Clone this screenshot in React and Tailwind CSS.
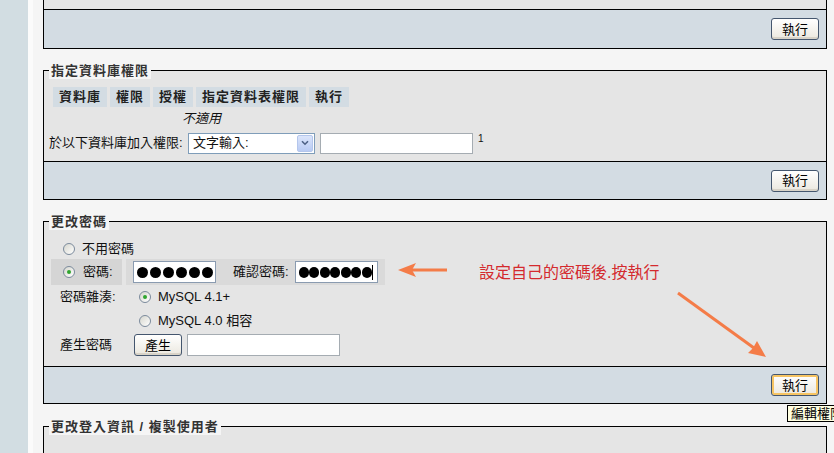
import React from "react";

function Radio({ on }) {
  return (
    <span className="w-[12px] h-[12px] shrink-0 rounded-full border border-[#7b8a9c] bg-linear-to-br from-[#d6d6ce] to-white flex items-center justify-center">
      {on && <span className="w-[4px] h-[4px] rounded-full bg-[#2fa52f]" />}
    </span>
  );
}

function Btn({ children, hot, className = "" }) {
  return (
    <button
      className={
        "h-[22px] rounded-[3px] border border-[#44566e] bg-linear-to-b from-white to-[#ebe8df] text-[13px] leading-none text-black " +
        (hot ? "shadow-[inset_0_0_0_2px_#f6c462] " : "shadow-[inset_0_-2px_0_#d8d3c8] ") +
        className
      }
    >
      {children}
    </button>
  );
}

function Footer({ h, hot }) {
  return (
    <div className={`${h} border-x border-b border-black bg-[#d3dce3] flex items-center justify-end pr-[7px]`}>
      <Btn hot={hot} className="w-[48px]">
        執行
      </Btn>
    </div>
  );
}

function Fieldset({ legend, className = "", children }) {
  return (
    <fieldset className={"border border-black bg-[#e5e5e5] px-[5px] " + className}>
      <legend className="px-[2px] bg-[#f5f5f5] font-bold text-[#333] leading-[17px] tracking-[1px]">
        {legend}
      </legend>
      {children}
    </fieldset>
  );
}

function Pwd({ n, tight }) {
  return (
    <div
      className={
        "w-[83px] h-[22px] shrink-0 border border-[#8a9bb0] bg-white flex items-center pl-[3px] overflow-hidden " +
        (tight ? "gap-[0.5px]" : "gap-[2px]")
      }
    >
      {Array.from({ length: n }).map((_, i) => (
        <span
          key={i}
          className={(tight ? "w-[10px] h-[11px]" : "w-[11px] h-[11px]") + " shrink-0 rounded-full bg-black"}
        />
      ))}
      {tight && <span className="w-px h-[15px] bg-black shrink-0" />}
    </div>
  );
}

export default function App() {
  const heads = ["資料庫", "權限", "授權", "指定資料表權限", "執行"];

  return (
    <div className="relative w-[834px] h-[453px] overflow-hidden flex text-[13px] text-[#111] font-['Liberation_Sans','Noto_Sans_CJK_TC',sans-serif]">
      <div className="w-[28px] shrink-0 bg-[#d2dde2]" />
      <div className="w-[5px] shrink-0 bg-[#fbfbfb]" />
      <div className="flex-1 bg-[#f5f5f5] pl-[10px] pr-[7px] flex flex-col">
        {/* tail of the section above */}
        <div className="h-[10px] shrink-0 border-x border-b border-black bg-[#e5e5e5]" />
        <Footer h="h-[39px] shrink-0" />

        {/* database privileges */}
        <Fieldset legend="指定資料庫權限" className="mt-[13px] shrink-0">
          <div className="pt-[8px] pb-[6px]">
            <div className="ml-[4px] flex gap-[3px] font-bold tracking-[1px] text-[#222]">
              {heads.map((h) => (
                <div key={h} className="h-[20px] px-[6px] bg-[#d3dce3] flex items-center">
                  {h}
                </div>
              ))}
            </div>
            <div className="ml-[4px] w-[297px] h-[24px] flex items-center justify-center italic">不適用</div>
            <div className="h-[24px] flex items-center">
              <span className="w-[139px] shrink-0 whitespace-nowrap">於以下資料庫加入權限:</span>
              <div className="w-[127px] h-[21px] border border-[#7f9db9] bg-white flex items-center justify-between pl-[4px] pr-[1px]">
                <span>文字輸入:</span>
                <span className="w-[16px] h-[17px] rounded-[2px] border border-[#b4c6ec] bg-linear-to-b from-[#dbe5fb] to-[#b9cbf3] flex items-center justify-center">
                  <svg width="8" height="6" viewBox="0 0 8 6">
                    <path d="M1 1.2 L4 4.2 L7 1.2" fill="none" stroke="#4d6185" strokeWidth="1.6" />
                  </svg>
                </span>
              </div>
              <div className="ml-[5px] w-[153px] h-[21px] border border-[#a5acb2] bg-white" />
              <span className="ml-[5px] self-start mt-[3px] text-[10px] leading-none">1</span>
            </div>
          </div>
        </Fieldset>
        <Footer h="h-[38px] shrink-0" />

        {/* change password */}
        <Fieldset legend="更改密碼" className="mt-[13px] shrink-0">
          <div className="pt-[9px] pb-[9px] pl-[2px]">
            <div className="h-[20px] flex items-center pl-[12px]">
              <Radio />
              <span className="ml-[7px]">不用密碼</span>
            </div>
            <div className="h-[26px] flex gap-[4px]">
              <div className="w-[71px] bg-[#d5d5d5] flex items-center pl-[12px]">
                <Radio on />
                <span className="ml-[8px]">密碼:</span>
              </div>
              <div className="w-[259px] bg-[#dadada] flex items-center pl-[7px]">
                <Pwd n={6} />
                <span className="ml-[17px]">確認密碼:</span>
                <div className="ml-[6px]">
                  <Pwd n={7} tight />
                </div>
              </div>
            </div>
            <div className="h-[24px] flex items-center">
              <span className="w-[75px] pl-[9px]">密碼雜湊:</span>
              <span className="pl-[13px] flex items-center">
                <Radio on />
                <span className="ml-[7px]">MySQL 4.1+</span>
              </span>
            </div>
            <div className="h-[24px] flex items-center">
              <span className="w-[75px]" />
              <span className="pl-[13px] flex items-center">
                <Radio />
                <span className="ml-[7px]">MySQL 4.0 相容</span>
              </span>
            </div>
            <div className="h-[24px] flex items-center">
              <span className="w-[75px] pl-[9px] self-start pt-[2px]">產生密碼</span>
              <span className="pl-[8px] flex items-center">
                <Btn className="w-[48px]">產生</Btn>
                <div className="ml-[5px] w-[153px] h-[22px] border border-[#a5acb2] bg-white" />
              </span>
            </div>
          </div>
        </Fieldset>
        <Footer h="h-[37px] shrink-0" hot />

        {/* login info */}
        <Fieldset legend="更改登入資訊 / 複製使用者" className="mt-[14px] shrink-0">
          <div className="h-[60px]" />
        </Fieldset>
      </div>

      {/* annotations drawn over the page */}
      <svg className="absolute inset-0 pointer-events-none" width="834" height="453">
        <line x1="447" y1="270" x2="410" y2="270" stroke="#f47c48" strokeWidth="3" />
        <path d="M398 270 L416 263 L412 270 L416 277 Z" fill="#f47c48" />
        <line x1="678" y1="293" x2="754" y2="348" stroke="#f47c48" strokeWidth="3" />
        <path d="M766 357 L748 353 L753 348 L757 341 Z" fill="#f47c48" />
      </svg>
      <div className="absolute left-[479px] top-[263px] text-[16px] leading-[20px] text-[#d42a2e] whitespace-nowrap">
        設定自己的密碼後.按執行
      </div>
      <div className="absolute left-[787px] top-[405px] h-[17px] border border-black bg-[#ffffe1] px-[3px] text-[13px] leading-[15px] text-black whitespace-nowrap">
        編輯權限
      </div>
    </div>
  );
}
